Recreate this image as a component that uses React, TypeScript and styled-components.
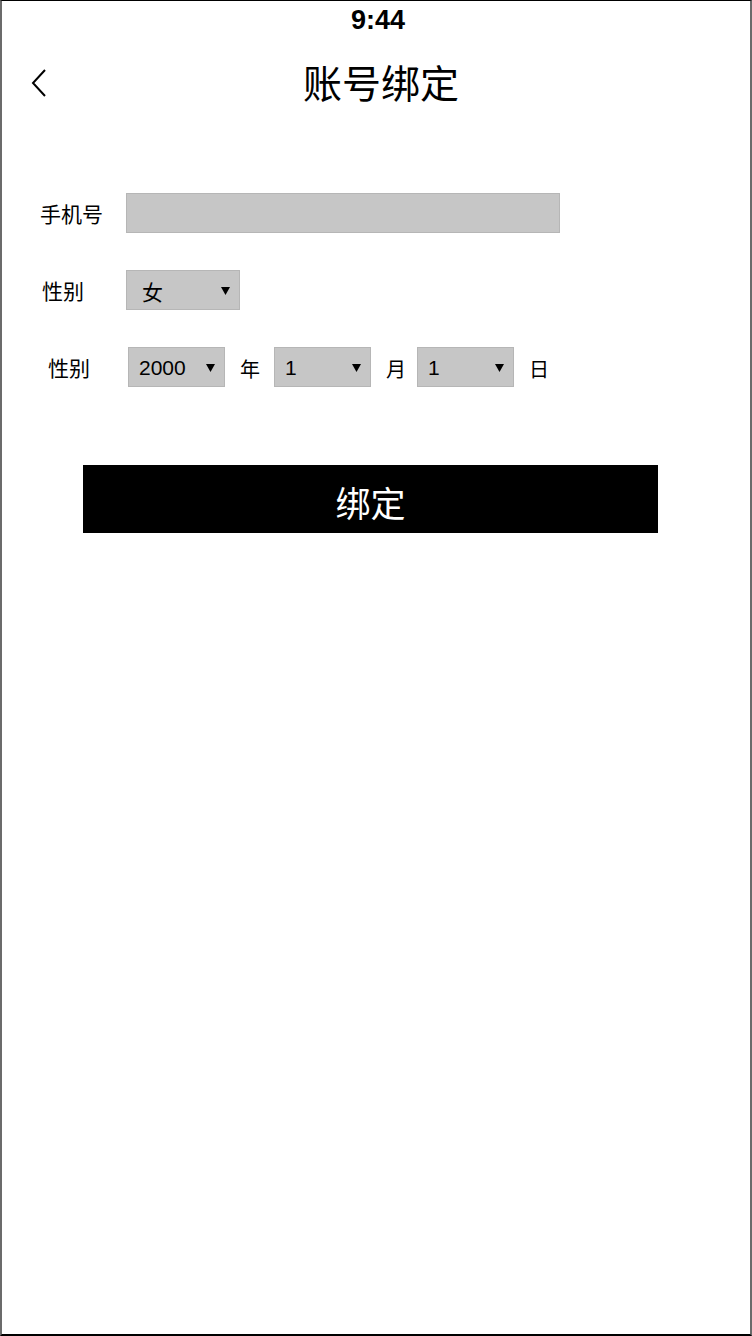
import React from 'react'
import styled, { createGlobalStyle } from 'styled-components'

const GlobalStyle = createGlobalStyle`
  html, body {
    margin  : 0;
    padding : 0;
    background : #fff;
  }

  * {
    box-sizing : border-box;
  }
`

const FONT = `"Liberation Sans", "Noto Sans CJK SC", sans-serif`

const Screen = styled.div`
  width         : 752px;
  height        : 1336px;
  display       : flex;
  flex-direction: column;
  background    : #fff;
  border-top    : 1px solid #000;
  border-left   : 2px solid #6b6b6b;
  border-right  : 2px solid #6b6b6b;
  border-bottom : 2px solid #000;
  font-family   : ${FONT};
  color         : #000;
`

const StatusBar = styled.div`
  height          : 38px;
  display         : flex;
  justify-content : center;
  align-items     : center;
  font-size       : 27px;
  font-weight     : bold;
  padding-left    : 4px;
`

const Header = styled.div`
  height       : 88px;
  display      : grid;
  grid-template-columns : 80px 1fr 80px;
  align-items  : center;
`

const BackButton = styled.button`
  border      : none;
  background  : none;
  padding     : 0 0 0 29px;
  height      : 40px;
  display     : flex;
  align-items : center;
  cursor      : pointer;
`

const Title = styled.h1`
  margin        : 0;
  text-align    : center;
  font-size     : 39px;
  font-weight   : normal;
  padding       : 0 0 4px 10px;
`

const Form = styled.form`
  display        : flex;
  flex-direction : column;
  gap            : 37px;
  padding        : 66px 0 0 38px;
`

const Row = styled.div`
  display     : flex;
  align-items : center;
  height      : 40px;
`

const Label = styled.label<{ $offset: number; $width: number }>`
  width       : ${p => p.$width}px;
  padding-left: ${p => p.$offset}px;
  font-size   : 21px;
  flex-shrink : 0;
`

const TextInput = styled.input`
  width      : 434px;
  height     : 40px;
  border     : 1px solid #b6b6b6;
  background : #c6c6c6;
  outline    : none;
  font-size  : 20px;
  padding    : 0 10px;
`

const SelectBox = styled.div<{ $width: number }>`
  width           : ${p => p.$width}px;
  height          : 40px;
  display         : flex;
  align-items     : center;
  justify-content : space-between;
  padding         : 2px 9px 0 10px;
  border          : 1px solid #b6b6b6;
  background      : #c6c6c6;
  font-size       : 21px;
  cursor          : pointer;
`

const SelectValue = styled.span<{ $cjk?: boolean }>`
  padding-left : ${p => (p.$cjk ? 5 : 0)}px;
`

const Unit = styled.span<{ $after?: number }>`
  font-size : 20px;
  padding   : 2px ${p => p.$after ?? 0}px 0 15px;
`

const SubmitButton = styled.button`
  align-self  : flex-start;
  margin      : 41px 0 0 43px;
  width       : 575px;
  height      : 68px;
  padding     : 4px 0 0;
  border      : none;
  background  : #000;
  color       : #fff;
  font-family : ${FONT};
  font-size   : 35px;
  cursor      : pointer;
`

const Caret = () => (
  <svg width="9" height="8" viewBox="0 0 9 8">
    <path d="M0 0 H9 L4.5 8 Z" fill="#000" />
  </svg>
)

const Chevron = () => (
  <svg width="16" height="28" viewBox="0 0 16 28" fill="none">
    <path d="M14 1 L2 14 L14 27" stroke="#000" strokeWidth="2" />
  </svg>
)

const Select: React.FC<{ value: string; width: number; cjk?: boolean }> = ({ value, width, cjk }) => (
  <SelectBox $width={width} role="listbox">
    <SelectValue $cjk={cjk}>{value}</SelectValue>
    <Caret />
  </SelectBox>
)

export default function App() {
  return (
    <>
      <GlobalStyle />
      <Screen>
        <StatusBar>9:44</StatusBar>
        <Header>
          <BackButton aria-label="back">
            <Chevron />
          </BackButton>
          <Title>账号绑定</Title>
          <span />
        </Header>
        <Form onSubmit={e => e.preventDefault()}>
          <Row>
            <Label $offset={0} $width={86}>手机号</Label>
            <TextInput type="tel" />
          </Row>
          <Row>
            <Label $offset={2} $width={86}>性别</Label>
            <Select value="女" width={114} cjk />
          </Row>
          <Row>
            <Label $offset={8} $width={88}>性别</Label>
            <Select value="2000" width={97} />
            <Unit $after={14}>年</Unit>
            <Select value="1" width={97} />
            <Unit $after={11}>月</Unit>
            <Select value="1" width={97} />
            <Unit>日</Unit>
          </Row>
          <SubmitButton type="submit">绑定</SubmitButton>
        </Form>
      </Screen>
    </>
  )
}
